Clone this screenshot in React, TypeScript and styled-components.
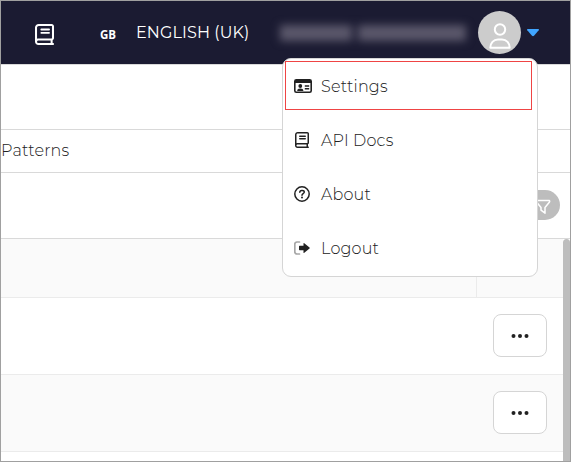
import React from "react";
import styled, { createGlobalStyle } from "styled-components";

const GlobalStyle = createGlobalStyle`
  * { box-sizing: border-box; }
  html, body { margin: 0; padding: 0; overflow: hidden; }
  body { font-family: Montserrat, Inter, "Liberation Sans", sans-serif; font-weight: 300; color: #212121; }
`;

const Frame = styled.div`
  position: relative;
  width: 571px;
  height: 462px;
  border: 1px solid #a0a0a0;
  background: #fff;
  overflow: hidden;
`;

const TopBar = styled.header`
  display: flex;
  align-items: center;
  height: 64px;
  padding-left: 34px;
  background: #1b1b32;
  border-bottom: 1px solid #d9d9d9;
  color: #fff;
`;

const TopIcon = styled.div`
  display: flex;
  width: 20px;
  margin-top: 4px;
`;

const CountryCode = styled.span`
  width: 36px;
  margin-left: 45px;
  padding-top: 3px;
  font: 700 11.5px "Open Sans", sans-serif;
`;

const Language = styled.span`
  width: 144px;
  font-size: 16px;
  font-weight: 400;
  letter-spacing: 0.12px;
  white-space: nowrap;
`;

const HiddenName = styled.div`
  display: flex;
  gap: 6px;
  width: 189px;
  filter: blur(4px);
`;

const NameBar = styled.i<{ $width: number }>`
  width: ${(p) => p.$width}px;
  height: 16px;
  background: #5b586b;
`;

const Avatar = styled.div`
  display: flex;
  justify-content: center;
  width: 43px;
  height: 43px;
  margin: 0 6px 0 9px;
  padding-top: 12px;
  border-radius: 50%;
  background: #ccc;
`;

const TabStrip = styled.nav`
  display: flex;
  align-items: center;
  height: 43px;
  padding-bottom: 2px;
  border-bottom: 1px solid #d9d9d9;
  font-size: 16px;
  letter-spacing: 0.18px;
`;

const Spacer = styled.div`
  height: 65px;
  border-bottom: 1px solid #d9d9d9;
`;

const FilterBar = styled.div`
  display: flex;
  justify-content: flex-end;
  align-items: center;
  height: 66px;
  padding-right: 10px;
  border-bottom: 1px solid #d9d9d9;
`;

const FilterPill = styled.button`
  display: flex;
  align-items: center;
  justify-content: flex-end;
  width: 60px;
  height: 30px;
  margin-top: -1px;
  padding: 3px 9px 0 0;
  border: 0;
  border-radius: 15px;
  background: #bdbdbd;
`;

const TableArea = styled.div`
  display: flex;
  height: 222px;
`;

const Table = styled.div`
  flex: 1;
`;

const HeadRow = styled.div`
  display: grid;
  grid-template-columns: 475px 1fr;
  height: 59px;
  background: #fafafa;
  border-bottom: 1px solid #ebebeb;
`;

const HeadCell = styled.div`
  & + & { border-left: 1px solid #ebebeb; }
`;

const Row = styled.div<{ $shaded?: boolean }>`
  display: flex;
  justify-content: flex-end;
  align-items: center;
  height: 77px;
  padding-right: 16px;
  border-bottom: 1px solid #ebebeb;
  background: ${(p) => (p.$shaded ? "#fafafa" : "#fff")};
`;

const MoreButton = styled.button`
  display: flex;
  align-items: center;
  justify-content: center;
  width: 54px;
  height: 43px;
  margin-top: -1px;
  padding: 0;
  border: 1px solid #d5d5d5;
  border-radius: 8px;
  background: #fff;
`;

const Scrollbar = styled.div`
  width: 7px;
  border-radius: 4px 4px 0 0;
  background: #bdbdbd;
`;

const Menu = styled.div`
  position: absolute;
  left: 281px;
  top: 57px;
  width: 256px;
  height: 219px;
  padding: 2px 5px 0 2px;
  border: 1px solid #d5d5d5;
  border-radius: 9px;
  background: #fff;
`;

const MenuItem = styled.div<{ $focused?: boolean }>`
  display: flex;
  align-items: center;
  height: 49px;
  margin-bottom: 5px;
  padding: 1px 0 0 8px;
  border: 1px solid ${(p) => (p.$focused ? "#ef4444" : "transparent")};
  font-size: 16px;
  letter-spacing: 0.18px;
`;

const MenuIcon = styled.span<{ $indent?: number }>`
  display: flex;
  align-items: center;
  width: 27px;
  padding-left: ${(p) => p.$indent ?? 0}px;
`;

const MenuLabel = styled.span`
  padding-top: 1px;
`;

const Book = ({ width, height }: { width: number; height: number }) => (
  <svg width={width} height={height} viewBox="0 0 448 512" fill="currentColor" preserveAspectRatio="none">
    <path d="M0 88C0 39.400 39.400 0 88 0H392c30.900 0 56 25.100 56 56V344c0 22.300-13.100 41.600-32 50.600V464h8c13.300 0 24 10.700 24 24s-10.700 24-24 24H80c-44.200 0-80-35.800-80-80V88zM80 400c-17.700 0-32 14.300-32 32s14.300 32 32 32H368V400H80zM48 358.700c9.800-4.300 20.600-6.700 32-6.700H392c4.400 0 8-3.600 8-8V56c0-4.400-3.600-8-8-8H88c-22.100 0-40 17.900-40 40V358.700zM152 112H328c13.300 0 24 10.700 24 24s-10.700 24-24 24H152c-13.300 0-24-10.700-24-24s10.700-24 24-24zm0 80H328c13.300 0 24 10.700 24 24s-10.700 24-24 24H152c-13.300 0-24-10.700-24-24s10.700-24 24-24z" />
  </svg>
);

const IdCard = () => (
  <svg width="18" height="14" viewBox="0 0 18 14">
    <rect x="0.8" y="0.8" width="16.400" height="12.400" rx="1.500" fill="#fff" stroke="#212121" strokeWidth="1.600" />
    <path d="M1 1h16v3H1z" fill="#212121" />
    <circle cx="6.300" cy="7" r="1.900" fill="#212121" />
    <path d="M3.200 11.900c0-1.700 1-2.500 3.100-2.500s3.100.8 3.100 2.500z" fill="#212121" />
    <path d="M10.800 7h4.400M10.800 9.700h4.400" stroke="#212121" strokeWidth="1.500" />
  </svg>
);

const Question = () => (
  <svg width="16" height="16" viewBox="0 0 16 16" fill="none" stroke="#212121">
    <circle cx="8" cy="8" r="7.200" strokeWidth="1.500" />
    <path d="M5.800 6.200c0-1.200.8-1.800 2-1.800h.5c1.200 0 2 .7 2 1.700 0 1.500-2.300 1.500-2.300 3.100" strokeWidth="1.500" strokeLinecap="round" />
    <circle cx="8" cy="11.400" r="1" fill="#212121" stroke="none" />
  </svg>
);

const Exit = () => (
  <svg width="16" height="14" viewBox="0 0 16 14">
    <path d="M5.500 1H3a2.200 2.200 0 0 0-2.200 2.200v7.600A2.200 2.200 0 0 0 3 13h2.500" fill="none" stroke="#a6a6a6" strokeWidth="1.700" strokeLinecap="round" />
    <path d="M5 5.400q0-.6.600-.6H9.500V2.600q0-1 .8-.4l5.200 4.300q.6.500 0 1l-5.200 4.300q-.8.600-.8-.4V9.200H5.600q-.6 0-.6-.6z" fill="#212121" />
  </svg>
);

const Person = () => (
  <svg width="22" height="27" viewBox="0 0 22 27" fill="none" stroke="#fff" strokeWidth="2">
    <circle cx="11" cy="6.500" r="5.200" />
    <path d="M1.300 24.700c0-4.700 3.200-8.200 7.700-8.200h4c4.500 0 7.700 3.500 7.700 8.200z" strokeLinejoin="round" />
  </svg>
);

const Caret = () => (
  <svg width="12" height="8" viewBox="0 0 12 8">
    <path d="M.7 0h10.600q1.100.2.400 1.200L7 6.800q-1 .9-2 0L.3 1.200Q-.4.200.7 0z" fill="#40a5ff" />
  </svg>
);

const Funnel = () => (
  <svg width="16" height="16" viewBox="0 0 16 16" fill="none" stroke="#fff" strokeWidth="1.500" strokeLinejoin="round">
    <path d="M1.500 1.500h13q.5 1-.2 1.800L10 8.500v5.700l-4-3V8.500L1.700 3.300Q1 2.500 1.500 1.500z" />
  </svg>
);

const Dots = () => (
  <svg width="18" height="4" viewBox="0 0 18 4" fill="#212121">
    <circle cx="2.500" cy="2" r="2" />
    <circle cx="9" cy="2" r="2" />
    <circle cx="15.500" cy="2" r="2" />
  </svg>
);

const items = [
  { label: "Settings", icon: <IdCard /> },
  { label: "API Docs", icon: <Book width={14} height={16} />, indent: 1 },
  { label: "About", icon: <Question /> },
  { label: "Logout", icon: <Exit /> },
];

export default function App() {
  return (
    <>
      <GlobalStyle />
      <Frame>
        <TopBar>
          <TopIcon><Book width={19} height={21} /></TopIcon>
          <CountryCode>GB</CountryCode>
          <Language>ENGLISH (UK)</Language>
          <HiddenName><NameBar $width={72} /><NameBar $width={108} /></HiddenName>
          <Avatar><Person /></Avatar>
          <Caret />
        </TopBar>
        <Spacer />
        <TabStrip>Patterns</TabStrip>
        <FilterBar><FilterPill aria-label="Filter"><Funnel /></FilterPill></FilterBar>
        <TableArea>
          <Table>
            <HeadRow><HeadCell /><HeadCell /></HeadRow>
            <Row><MoreButton aria-label="More"><Dots /></MoreButton></Row>
            <Row $shaded><MoreButton aria-label="More"><Dots /></MoreButton></Row>
          </Table>
          <Scrollbar />
        </TableArea>
        <Menu>
          {items.map((item, i) => (
            <MenuItem key={item.label} $focused={i === 0}>
              <MenuIcon $indent={item.indent}>{item.icon}</MenuIcon>
              <MenuLabel>{item.label}</MenuLabel>
            </MenuItem>
          ))}
        </Menu>
      </Frame>
    </>
  );
}
